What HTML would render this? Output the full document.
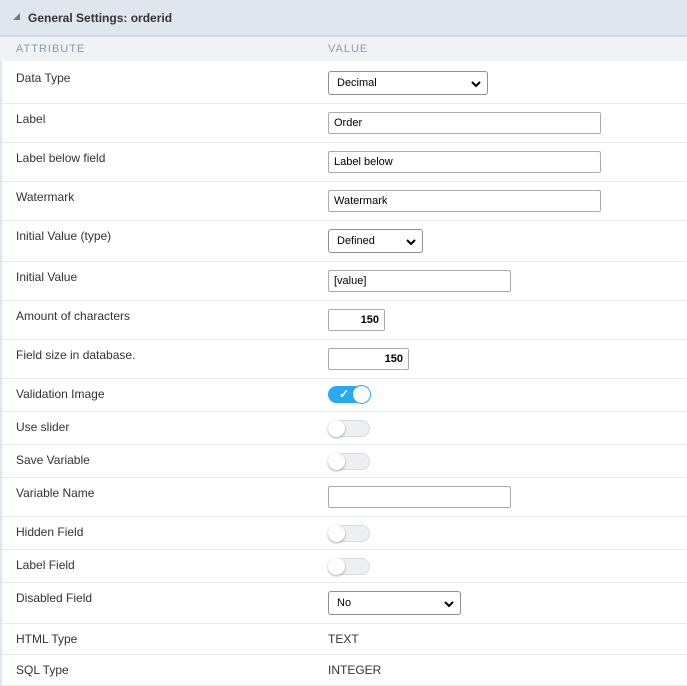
<!DOCTYPE html><html><head><style>
body{margin:0;width:687px;height:686px;background:#fff;font-family:"Liberation Sans",sans-serif;font-size:12px;color:#333;position:relative;overflow:hidden}
.a{position:absolute}
.hd{left:0;top:0;width:687px;height:35px;background:#e0e6ee;border-bottom:2px solid #d3dae3}
.ch{left:0;top:37px;width:687px;height:24px;background:#f0f3f6;color:#8a9aa8;font-size:11px;letter-spacing:1px}
.ln{left:2px;width:685px;height:1px;background:#e8ebee}
.lb{left:16px}
.in{left:328px;height:20px;border:1px solid #a9adb3;border-radius:2px;box-sizing:border-box;padding:0 5px;font-size:11px;color:#000;background:#fff;line-height:20px}
.sel{border-color:#8f8f8f;border-radius:3px;line-height:22px;padding-left:8px}
.sel svg{position:absolute;right:6px;top:8px}
.tg{left:328px;width:42px;height:17px;border-radius:9px;background:#edf0f3;border:1px solid #d5dce3;box-sizing:border-box}
.tg i{position:absolute;left:-1px;top:-1px;width:17px;height:17px;border-radius:50%;background:#fff;box-shadow:0 1px 2px rgba(0,0,0,.35)}
</style></head><body>
<div class="a" style="left:0;top:0;width:2px;height:686px;background:#e0e6ee"></div>
<div class="a hd"><span class="a" style="left:13px;top:13px;width:0;height:0;border-left:7px solid transparent;border bottom:0;border-bottom:7px solid #777"></span><span class="a" style="left:28px;top:11px;font-weight:bold;color:#333">General Settings: orderid</span></div>
<div class="a ch"><span class="a" style="left:16px;top:6px">ATTRIBUTE</span><span class="a" style="left:328px;top:6px">VALUE</span></div>

<div class="a lb" style="top:71px">Data Type</div>
<div class="a in sel" style="top:71px;width:160px;height:24px">Decimal<svg width="10" height="8"><path d="M1 2l4 4 4-4" stroke="#000" stroke-width="2" fill="none"/></svg></div>
<div class="a ln" style="top:103px"></div>
<div class="a lb" style="top:112px">Label</div>
<div class="a in" style="top:112px;width:273px;height:22px">Order</div>
<div class="a ln" style="top:142px"></div>
<div class="a lb" style="top:151px">Label below field</div>
<div class="a in" style="top:151px;width:273px;height:22px">Label below</div>
<div class="a ln" style="top:181px"></div>
<div class="a lb" style="top:190px">Watermark</div>
<div class="a in" style="top:190px;width:273px;height:22px">Watermark</div>
<div class="a ln" style="top:220px"></div>
<div class="a lb" style="top:229px">Initial Value (type)</div>
<div class="a in sel" style="top:229px;width:95px;height:24px">Defined<svg width="10" height="8"><path d="M1 2l4 4 4-4" stroke="#000" stroke-width="2" fill="none"/></svg></div>
<div class="a ln" style="top:261px"></div>
<div class="a lb" style="top:270px">Initial Value</div>
<div class="a in" style="top:270px;width:183px;height:22px">[value]</div>
<div class="a ln" style="top:300px"></div>
<div class="a lb" style="top:309px">Amount of characters</div>
<div class="a in" style="top:309px;width:57px;height:22px;text-align:right;font-weight:bold">150</div>
<div class="a ln" style="top:339px"></div>
<div class="a lb" style="top:348px">Field size in database.</div>
<div class="a in" style="top:348px;width:81px;height:22px;text-align:right;font-weight:bold">150</div>
<div class="a ln" style="top:378px"></div>
<div class="a lb" style="top:387px">Validation Image</div>
<div class="a tg" style="top:386px;background:#28a9f3;border-color:#28a9f3"><span class="a" style="left:10px;top:0;color:#fff;font-size:12px;font-weight:bold">✓</span><i style="left:24px;box-shadow:0 0 0 1px #28a9f3"></i></div>
<div class="a ln" style="top:411px"></div>
<div class="a lb" style="top:420px">Use slider</div>
<div class="a tg" style="top:420px"><i></i></div>
<div class="a ln" style="top:444px"></div>
<div class="a lb" style="top:453px">Save Variable</div>
<div class="a tg" style="top:453px"><i></i></div>
<div class="a ln" style="top:477px"></div>
<div class="a lb" style="top:486px">Variable Name</div>
<div class="a in" style="top:486px;width:183px;height:22px"></div>
<div class="a ln" style="top:516px"></div>
<div class="a lb" style="top:525px">Hidden Field</div>
<div class="a tg" style="top:525px"><i></i></div>
<div class="a ln" style="top:549px"></div>
<div class="a lb" style="top:558px">Label Field</div>
<div class="a tg" style="top:558px"><i></i></div>
<div class="a ln" style="top:582px"></div>
<div class="a lb" style="top:591px">Disabled Field</div>
<div class="a in sel" style="top:591px;width:133px;height:24px">No<svg width="10" height="8"><path d="M1 2l4 4 4-4" stroke="#000" stroke-width="2" fill="none"/></svg></div>
<div class="a ln" style="top:623px"></div>
<div class="a lb" style="top:632px">HTML Type</div>
<div class="a" style="left:328px;top:632px">TEXT</div>
<div class="a ln" style="top:654px"></div>
<div class="a lb" style="top:663px">SQL Type</div>
<div class="a" style="left:328px;top:663px">INTEGER</div>
<div class="a ln" style="top:685px"></div>
</body></html>
